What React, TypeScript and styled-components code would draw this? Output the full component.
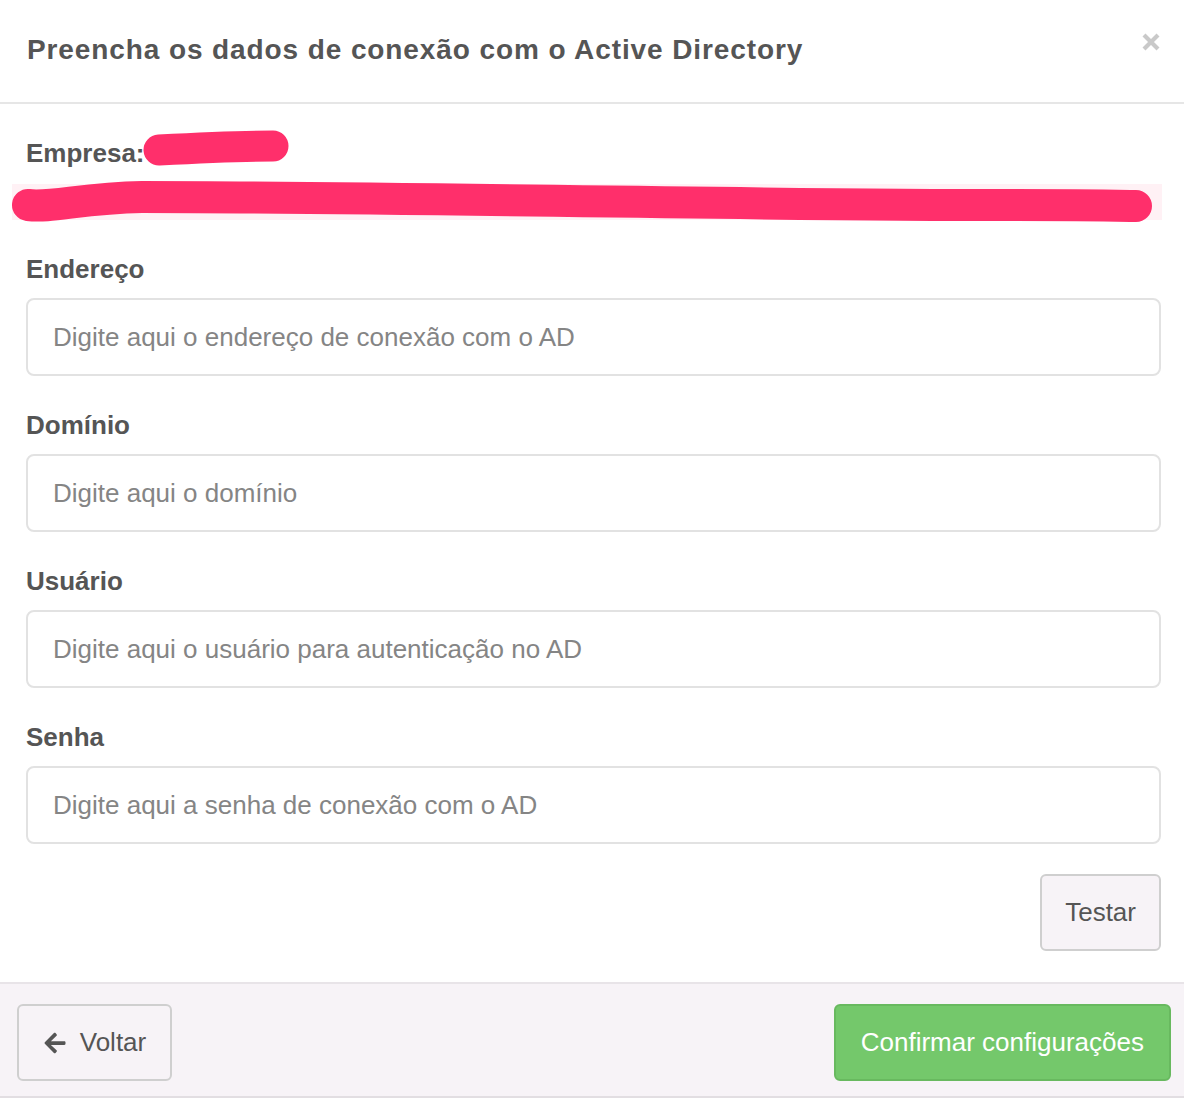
import styled, { createGlobalStyle } from "styled-components";
import { FaArrowLeft } from "react-icons/fa";

type FieldProps = {
  label: string;
  placeholder: string;
  type?: string;
};

const GlobalStyle = createGlobalStyle`
  html, body {
    margin: 0;
    padding: 0;
    background: #ffffff;
  }
  * {
    box-sizing: border-box;
  }
`;

export const Modal = styled.div`
  width: 1184px;
  min-height: 1098px;
  display: flex;
  flex-direction: column;
  background: #ffffff;
  font-family: "Liberation Sans", Arial, sans-serif;
  color: #555555;
`;

export const Header = styled.div`
  height: 104px;
  display: flex;
  align-items: center;
  justify-content: space-between;
  padding: 0 24px 2px 27px;
  border-bottom: 2px solid #e6e6e6;
`;

export const Title = styled.h4`
  margin: 0;
  font-size: 28px;
  font-weight: bold;
  color: #555555;
  letter-spacing: 0.9px;
`;

export const Close = styled.button`
  border: 0;
  background: none;
  padding: 0;
  width: 18px;
  height: 18px;
  margin-top: -17px;
  display: flex;
  cursor: pointer;
`;

export const Body = styled.div`
  padding: 33px 23px 29px 26px;
  display: flex;
  flex-direction: column;
`;

export const CompanyRow = styled.div`
  display: flex;
  align-items: center;
  height: 32px;
  font-size: 26px;
  font-weight: bold;
  line-height: 32px;
`;

export const Redaction = styled.svg`
  display: block;
  margin: 15px 0 0 -14px;
  width: calc(100% + 14px);
  height: 40px;
  overflow: visible;
`;

export const FieldGroup = styled.div`
  display: flex;
  flex-direction: column;
  margin-top: 29px;

  & + & {
    margin-top: 33px;
  }
`;

export const Label = styled.label`
  font-size: 26px;
  font-weight: bold;
  line-height: 32px;
  margin-bottom: 13px;
  color: #555555;
`;

export const Input = styled.input`
  height: 78px;
  width: 100%;
  border: 2px solid #e2e2e2;
  border-radius: 8px;
  padding: 0 25px;
  font-family: "Liberation Sans", Arial, sans-serif;
  font-size: 26px;
  color: #555555;
  background: #ffffff;
  outline: none;

  &::placeholder {
    color: #858585;
  }
`;

export const Actions = styled.div`
  display: flex;
  justify-content: flex-end;
  margin-top: 30px;
`;

export const Button = styled.button<{ $primary?: boolean }>`
  height: 77px;
  display: inline-flex;
  align-items: center;
  justify-content: center;
  gap: 13px;
  padding: 0 ${(p) => (p.$primary ? "25px" : "23px")};
  border-radius: 6px;
  font-family: "Liberation Sans", Arial, sans-serif;
  font-size: 26px;
  cursor: pointer;
  border: 2px solid ${(p) => (p.$primary ? "#68b95f" : "#cfcfcf")};
  background: ${(p) => (p.$primary ? "#74c86b" : "#f7f3f7")};
  color: ${(p) => (p.$primary ? "#ffffff" : "#555555")};
`;

export const Footer = styled.div`
  margin-top: auto;
  display: flex;
  justify-content: space-between;
  align-items: center;
  padding: 20px 13px 15px 17px;
  background: #f7f3f7;
  border-top: 2px solid #e8e4e8;
  border-bottom: 2px solid #e2dee2;
`;

const Field = ({ label, placeholder, type }: FieldProps) => (
  <FieldGroup>
    <Label>{label}</Label>
    <Input type={type ?? "text"} placeholder={placeholder} />
  </FieldGroup>
);

export default function App() {
  return (
    <>
      <GlobalStyle />
      <Modal>
        <Header>
          <Title>Preencha os dados de conexão com o Active Directory</Title>
          <Close aria-label="Fechar">
            <svg width="18" height="18" viewBox="0 0 18 18">
              <path
                d="M2 2 L16 16 M16 2 L2 16"
                stroke="#c9c9c9"
                strokeWidth="4.2"
                strokeLinecap="butt"
              />
            </svg>
          </Close>
        </Header>

        <Body>
          <CompanyRow>
            Empresa:
            <svg width="148" height="40" viewBox="0 0 148 40" overflow="visible">
              <path
                d="M14 17 C 50 15, 100 13, 128 13"
                stroke="#ff2f6b"
                strokeWidth="31"
                strokeLinecap="round"
                fill="none"
              />
            </svg>
          </CompanyRow>

          <Redaction viewBox="0 0 1149 40" preserveAspectRatio="none">
            <rect x="0" y="0" width="1150" height="36" fill="#fff1f5" />
            <path
              d="M16 21 C 40 24, 70 14, 130 13 C 400 13, 700 21, 1000 21 C 1080 21, 1120 22, 1124 22"
              stroke="#ff2f6b"
              strokeWidth="32"
              strokeLinecap="round"
              fill="none"
            />
          </Redaction>

          <Field
            label="Endereço"
            placeholder="Digite aqui o endereço de conexão com o AD"
          />
          <Field label="Domínio" placeholder="Digite aqui o domínio" />
          <Field
            label="Usuário"
            placeholder="Digite aqui o usuário para autenticação no AD"
          />
          <Field
            label="Senha"
            type="password"
            placeholder="Digite aqui a senha de conexão com o AD"
          />

          <Actions>
            <Button>Testar</Button>
          </Actions>
        </Body>

        <Footer>
          <Button style={{ width: 155 }}>
            <FaArrowLeft size={24} color="#555555" />
            Voltar
          </Button>
          <Button $primary>Confirmar configurações</Button>
        </Footer>
      </Modal>
    </>
  );
}
